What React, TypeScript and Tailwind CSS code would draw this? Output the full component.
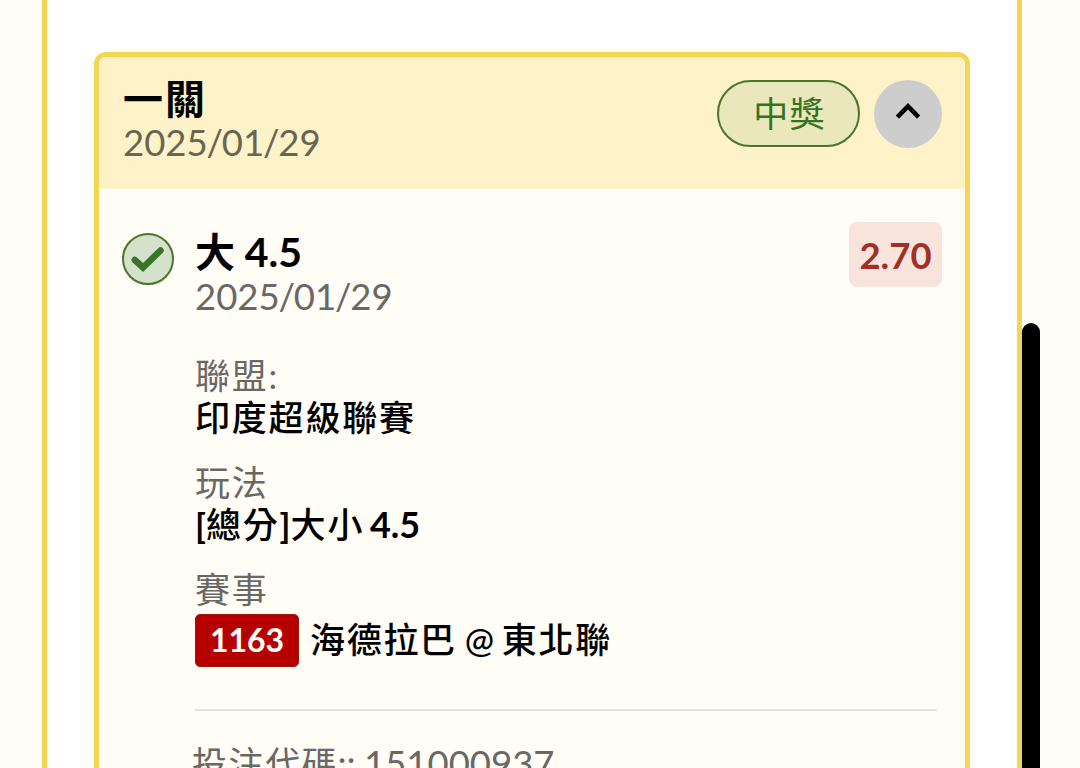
import type { ReactNode } from 'react'

function Label({ children }: { children: ReactNode }) {
    return <div className="h-[45px] leading-[42px] text-[35px] tracking-[1.7px] text-[#6a6864]">{children}</div>
}

function Field({ label, children }: { label: string; children: ReactNode }) {
    return (
        <div className="mb-[16px]">
            <Label>{label}</Label>
            <div className="h-[46px] leading-[37px] text-[35px] tracking-[1.8px] font-medium text-black whitespace-nowrap">{children}</div>
        </div>
    )
}

function PlayDate() {
    return (
        <>
            2025<span className="mx-[-1.2px]">/</span>01<span className="mx-[-1.2px]">/</span>29
        </>
    )
}

export default function App() {
    return (
        <div className="h-[768px] overflow-hidden bg-[#fffdf6] pl-[42px] pr-[40px] flex justify-between font-['Lato','Noto_Sans_CJK_TC',sans-serif]">
            <div className="w-[980px] h-full bg-white border-x-[5px] border-[#f3d653] px-[47px] pt-[52px]">
                <div className="w-[876px] h-[800px] rounded-[12px] border-[5px] border-[#f3d653] bg-[#fffdf6] overflow-hidden">
                    <div className="h-[132px] bg-[#fdf2c8] pl-[24px] pr-[23px] pt-[21px] flex justify-between">
                        <div>
                            <div className="h-[43px] leading-[42px] text-[40px] tracking-[2px] font-bold text-black">一關</div>
                            <div className="h-[42px] leading-[42px] text-[36.5px] text-[#6a6453]"><PlayDate /></div>
                        </div>
                        <div className="flex gap-[14px] pt-[2px]">
                            <div className="w-[143px] h-[67px] rounded-full border-2 border-[#48752f] bg-[#e9e7bb] flex items-center justify-center text-[35px] leading-[60px] tracking-[1.2px] pl-[2px] pb-[2px] text-[#34731f]">中獎</div>
                            <div className="w-[68px] h-[68px] rounded-full bg-[#cdcdcd] flex items-center justify-center pb-[6px]">
                                <svg width="26" height="18" viewBox="0 0 26 18" fill="none" stroke="#000" strokeWidth="4.6">
                                    <path d="M2.4 15.2L13 4.2L23.6 15.2" />
                                </svg>
                            </div>
                        </div>
                    </div>

                    <div className="pl-[23px] pr-[23px] pt-[33px] flex">
                        <div className="w-[52px] h-[52px] mt-[11px] mr-[21px] rounded-full border-2 border-[#48752f] bg-[#d5e1cb] flex items-center justify-center shrink-0">
                            <svg width="34" height="28" viewBox="0 0 34 28" fill="none" stroke="#38752a" strokeWidth="6.5">
                                <path d="M3.8 15L12 22.5L29.5 5.5" strokeLinecap="round" />
                            </svg>
                        </div>
                        <div className="grow">
                            <div className="flex justify-between h-[132px]">
                                <div className="pt-[8px]">
                                    <div className="h-[44px] leading-[44px] text-[40px] font-bold text-black">大 <span className="text-[41px]">4.5</span></div>
                                    <div className="h-[44px] leading-[44px] text-[36.5px] text-[#6a6864]"><PlayDate /></div>
                                </div>
                                <div className="w-[93px] h-[65px] rounded-[8px] bg-[#f8e4dd] flex items-center justify-center text-[36.5px] pt-[2px] font-bold text-[#a03024]">2.70</div>
                            </div>
                            <Field label="聯盟:">印度超級聯賽</Field>
                            <Field label="玩法">
                                <span className="tracking-normal font-bold">[</span>總分<span className="tracking-normal font-bold">]</span>大小
                                <span className="tracking-normal text-[36px] font-bold ml-[-3px]"> 4.5</span>
                            </Field>
                            <div>
                                <Label>賽事</Label>
                                <div className="h-[53px] mt-px flex items-center gap-[11px] whitespace-nowrap">
                                    <div className="w-[104px] h-[53px] rounded-[5px] bg-[#b60000] border border-[#9d1510] flex items-center justify-center text-[32px] font-bold text-white pb-px">1163</div>
                                    <div className="text-[35px] leading-[50px] tracking-[1.7px] font-medium text-black pb-[3px]">海德拉巴<span className="tracking-normal mx-[-1px]"> @ </span>東北聯</div>
                                </div>
                            </div>
                            <div className="w-[742px] mt-[42px] border-t-2 border-[#e4e2dc]" />
                            <div className="mt-[28px] -ml-[3px] text-[35px] leading-[48px] tracking-[1.6px] text-[#6a6864] whitespace-nowrap">
                                投注代碼<span className="tracking-normal text-[36.5px] ml-[-1px]">::</span><span className="tracking-normal text-[36.5px] ml-[-1px]"> 151000937</span>
                            </div>
                        </div>
                    </div>
                </div>
            </div>
            <div className="w-[18px] h-[600px] mt-[323px] rounded-full bg-black shrink-0" />
        </div>
    )
}
